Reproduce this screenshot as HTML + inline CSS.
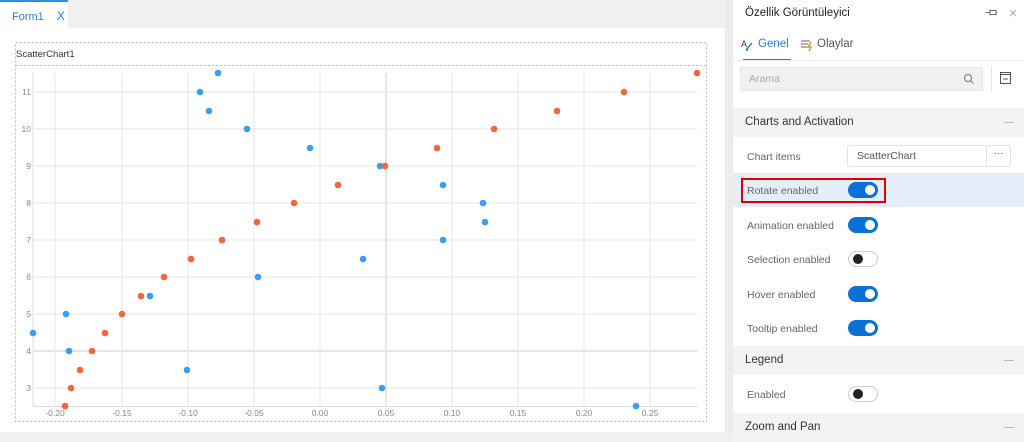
<!DOCTYPE html>
<html><head><meta charset="utf-8"><style>
*{margin:0;padding:0;box-sizing:border-box}
body{width:1024px;height:432px;overflow:hidden;background:#f0f0f0;font-family:"Liberation Sans",sans-serif;position:relative}
.abs{position:absolute}
.tab{left:0;top:0;width:68px;height:28px;background:#fff;border-top:2px solid #2b8fe0;color:#1e7fd6;font-size:11px;padding:7px 0 0 12px}
.content{left:0;top:28px;width:725px;height:404px;background:#fff}
.strip{left:725px;top:0;width:8px;height:432px;background:#ececec}
.panel{left:733px;top:0;width:291px;height:432px;background:#fff;font-size:11px;color:#444}
.sec{position:absolute;left:0;width:291px;height:29px;background:#f3f3f3;font-size:11.5px;color:#333;padding:8px 0 0 12px}
.sec:after{content:"";position:absolute;right:10px;top:14px;width:10px;height:1px;background:#bbb}
.lbl{position:absolute;left:14px;color:#666;font-size:10.5px}
.tg{position:absolute;left:115px;width:30px;height:16px;border-radius:8px;background:#0a72d6}
.tg:after{content:"";position:absolute;right:3px;top:3px;width:10px;height:10px;border-radius:50%;background:#fff}
.tg.off{background:#fff;border:1px solid #ccc}
.tg.off:after{left:4px;right:auto;top:2px;background:#222}
</style></head><body>
<div class="abs tab">Form1 <span style="margin-left:10px;font-size:12px">X</span></div>
<div class="abs content"></div>
<svg class="abs" style="left:0;top:0" width="725" height="432">
<rect x="15.5" y="42.5" width="691" height="379" fill="none" stroke="#bbb" stroke-dasharray="2,2"/>
<line x1="16" y1="65.5" x2="706" y2="65.5" stroke="#bbb" stroke-dasharray="2,2"/>
<text x="16" y="57" font-size="9.5" fill="#333" font-family="Liberation Sans">ScatterChart1</text>
<g stroke="#e6e6e6" stroke-width="1">
<line x1="55" y1="73" x2="55" y2="406"/><line x1="122" y1="73" x2="122" y2="406"/><line x1="188" y1="73" x2="188" y2="406"/><line x1="254" y1="73" x2="254" y2="406"/><line x1="320" y1="73" x2="320" y2="406"/><line x1="386" y1="73" x2="386" y2="406" stroke-width="2"/><line x1="452" y1="73" x2="452" y2="406"/><line x1="518" y1="73" x2="518" y2="406"/><line x1="584" y1="73" x2="584" y2="406"/><line x1="650" y1="73" x2="650" y2="406"/>
<line x1="33" y1="92" x2="697" y2="92"/><line x1="33" y1="129" x2="697" y2="129"/><line x1="33" y1="166" x2="697" y2="166"/><line x1="33" y1="203" x2="697" y2="203"/><line x1="33" y1="240" x2="697" y2="240"/><line x1="33" y1="277" x2="697" y2="277"/><line x1="33" y1="314" x2="697" y2="314"/><line x1="33" y1="351" x2="697" y2="351" stroke-width="2"/><line x1="33" y1="388" x2="697" y2="388"/>
<line x1="33" y1="73" x2="33" y2="406" stroke="#ddd"/><line x1="33" y1="406.5" x2="697" y2="406.5" stroke="#ddd"/>
</g>
<g font-size="8.5" fill="#888" font-family="Liberation Sans" text-anchor="end">
<text x="31" y="95">11</text><text x="31" y="132">10</text><text x="31" y="169">9</text><text x="31" y="206">8</text><text x="31" y="243">7</text><text x="31" y="280">6</text><text x="31" y="317">5</text><text x="31" y="354">4</text><text x="31" y="391">3</text>
</g>
<g font-size="8.5" fill="#888" font-family="Liberation Sans" text-anchor="middle">
<text x="55" y="416">-0.20</text><text x="122" y="416">-0.15</text><text x="188" y="416">-0.10</text><text x="254" y="416">-0.05</text><text x="320" y="416">0.00</text><text x="386" y="416">0.05</text><text x="452" y="416">0.10</text><text x="518" y="416">0.15</text><text x="584" y="416">0.20</text><text x="650" y="416">0.25</text>
</g>
<g fill="#3a9ff0">
<circle cx="218" cy="73" r="3.3"/><circle cx="200" cy="92" r="3.3"/><circle cx="209" cy="111" r="3.3"/><circle cx="247" cy="129" r="3.3"/><circle cx="310" cy="148" r="3.3"/><circle cx="380" cy="166" r="3.3"/><circle cx="443" cy="185" r="3.3"/><circle cx="483" cy="203" r="3.3"/><circle cx="485" cy="222" r="3.3"/><circle cx="443" cy="240" r="3.3"/><circle cx="363" cy="259" r="3.3"/><circle cx="258" cy="277" r="3.3"/><circle cx="150" cy="296" r="3.3"/><circle cx="66" cy="314" r="3.3"/><circle cx="33" cy="333" r="3.3"/><circle cx="69" cy="351" r="3.3"/><circle cx="187" cy="370" r="3.3"/><circle cx="382" cy="388" r="3.3"/><circle cx="636" cy="406" r="3.3"/>
</g>
<g fill="#fb6338">
<circle cx="697" cy="73" r="3.3"/><circle cx="624" cy="92" r="3.3"/><circle cx="557" cy="111" r="3.3"/><circle cx="494" cy="129" r="3.3"/><circle cx="437" cy="148" r="3.3"/><circle cx="385" cy="166" r="3.3"/><circle cx="338" cy="185" r="3.3"/><circle cx="294" cy="203" r="3.3"/><circle cx="257" cy="222" r="3.3"/><circle cx="222" cy="240" r="3.3"/><circle cx="191" cy="259" r="3.3"/><circle cx="164" cy="277" r="3.3"/><circle cx="141" cy="296" r="3.3"/><circle cx="122" cy="314" r="3.3"/><circle cx="105" cy="333" r="3.3"/><circle cx="92" cy="351" r="3.3"/><circle cx="80" cy="370" r="3.3"/><circle cx="71" cy="388" r="3.3"/><circle cx="65" cy="406" r="3.3"/>
</g>
</svg>
<div class="abs strip"></div>
<div class="abs panel">
<div class="abs" style="left:12px;top:7px;font-size:11.5px;color:#222">Özellik Görüntüleyici</div>
<svg class="abs" style="left:252px;top:8px" width="34" height="10"><path d="M1 4.5h4M5 1.5v6M5 2.5h6v4H5M11 4.5h1" stroke="#666" fill="none"/><path d="M25 2l6 6M31 2l-6 6" stroke="#aaa"/></svg>
<svg class="abs" style="left:8px;top:38px" width="16" height="14"><text x="0" y="9" font-size="9" fill="#333" font-family="Liberation Sans">A</text><path d="M5 12l6-7M5 12l2 0" stroke="#1e7fd6" stroke-width="1.4" fill="none"/></svg>
<div class="abs" style="left:25px;top:38px;font-size:11.5px;color:#1e7fd6">Genel</div>
<div class="abs" style="left:10px;top:59px;width:48px;height:2px;background:#1e7fd6"></div>
<svg class="abs" style="left:67px;top:38px" width="14" height="14"><path d="M1 3h9M1 6h7M1 9h6" stroke="#666"/><path d="M11 4l-3 5h3l-2 4" stroke="#e89020" stroke-width="1.4" fill="none"/></svg>
<div class="abs" style="left:84px;top:38px;font-size:11.5px;color:#555">Olaylar</div>
<div class="abs" style="left:0;top:60px;width:291px;height:1px;background:#eee"></div>
<div class="abs" style="left:7px;top:67px;width:243px;height:24px;background:#f1f1f1;border:1px solid #e6e6e6;border-radius:2px;color:#aaa;font-size:10.5px;padding:5px 0 0 8px">Arama</div>
<svg class="abs" style="left:230px;top:73px" width="12" height="12"><circle cx="5" cy="5" r="3.5" stroke="#777" fill="none"/><path d="M7.5 7.5l3 3" stroke="#777"/></svg>
<div class="abs" style="left:258px;top:66px;width:1px;height:26px;background:#e5e5e5"></div>
<svg class="abs" style="left:266px;top:71px" width="14" height="14"><rect x="1.5" y="1.5" width="10" height="11" fill="none" stroke="#555"/><path d="M1.5 3.5h10M4 8h5" stroke="#555"/></svg>
<div class="sec" style="top:108px">Charts and Activation</div>
<div class="lbl" style="top:151px">Chart items</div>
<div class="abs" style="left:114px;top:145px;width:164px;height:22px;border:1px solid #e3e3e3;border-radius:2px;font-size:10.5px;color:#555;padding:4px 0 0 9px">ScatterChart<div class="abs" style="right:0;top:0;width:24px;height:20px;border-left:1px solid #e3e3e3;text-align:center;color:#555;font-size:10px;padding-top:2px">···</div></div>
<div class="abs" style="left:0;top:173px;width:291px;height:34px;background:#e3eef9"></div>
<div class="abs" style="left:8px;top:178px;width:145px;height:25px;border:2px solid #e00000"></div>
<div class="lbl" style="top:185px">Rotate enabled</div><div class="tg" style="top:182px"></div>
<div class="lbl" style="top:220px">Animation enabled</div><div class="tg" style="top:217px"></div>
<div class="lbl" style="top:254px">Selection enabled</div><div class="tg off" style="top:251px"></div>
<div class="lbl" style="top:289px">Hover enabled</div><div class="tg" style="top:286px"></div>
<div class="lbl" style="top:323px">Tooltip enabled</div><div class="tg" style="top:320px"></div>
<div class="sec" style="top:346px">Legend</div>
<div class="lbl" style="top:389px">Enabled</div><div class="tg off" style="top:386px"></div>
<div class="sec" style="top:413px;height:29px">Zoom and Pan</div>
</div>
</body></html>
